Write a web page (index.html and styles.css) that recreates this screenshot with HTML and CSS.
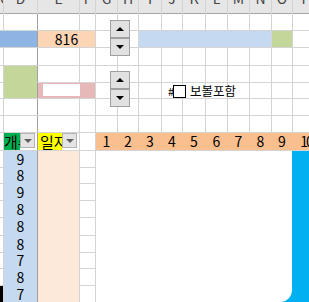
FILE: index.html
```html
<!DOCTYPE html>
<html lang="ko">
<head>
    <meta charset="UTF-8">
    <meta name="viewport" content="width=device-width, initial-scale=1.0">
    <title>Sheet</title>
    <link rel="stylesheet" href="styles.css">
</head>
<body>
    <div class="sheet">
        <div class="grid">
            <!-- column headers -->
            <div class="h"><span>C</span></div>
            <div class="h"><span>D</span></div>
            <div class="h"><span>E</span></div>
            <div class="h"><span>F</span></div>
            <div class="h"><span>G</span></div>
            <div class="h"><span>H</span></div>
            <div class="h"><span>I</span></div>
            <div class="h"><span>J</span></div>
            <div class="h"><span>K</span></div>
            <div class="h"><span>L</span></div>
            <div class="h"><span>M</span></div>
            <div class="h"><span>N</span></div>
            <div class="h"><span>O</span></div>
            <div class="h"><span>P</span></div>

            <!-- row 1 -->
            <div class="c"></div><div class="c"></div><div class="c edge"></div><div class="c"></div>
            <div class="c"></div><div class="c"></div><div class="c"></div><div class="c"></div>
            <div class="c"></div><div class="c"></div><div class="c"></div><div class="c"></div>
            <div class="c"></div><div class="c"></div>

            <!-- row 2 -->
            <div class="c blue span2"></div>
            <div class="c peach span2 edge total">816</div>
            <div class="c"></div><div class="c"></div>
            <div class="c sky span6"></div>
            <div class="c olive"></div>
            <div class="c"></div>

            <!-- row 3 -->
            <div class="c"></div><div class="c"></div><div class="c edge"></div><div class="c"></div>
            <div class="c"></div><div class="c"></div><div class="c"></div><div class="c"></div>
            <div class="c"></div><div class="c"></div><div class="c"></div><div class="c"></div>
            <div class="c"></div><div class="c"></div>

            <!-- row 4 -->
            <div class="c"></div>
            <div class="c olive rows2"></div>
            <div class="c edge"></div><div class="c"></div>
            <div class="c"></div><div class="c"></div><div class="c"></div><div class="c"></div>
            <div class="c"></div><div class="c"></div><div class="c"></div><div class="c"></div>
            <div class="c"></div><div class="c"></div>

            <!-- row 5 -->
            <div class="c"></div>
            <div class="c pink span2 edge"><div class="pink-box"></div></div>
            <div class="c"></div><div class="c"></div><div class="c"></div><div class="c"></div>
            <div class="c"></div><div class="c"></div><div class="c"></div><div class="c"></div>
            <div class="c"></div><div class="c"></div>

            <!-- row 6 -->
            <div class="c"></div><div class="c"></div><div class="c edge"></div><div class="c"></div>
            <div class="c"></div><div class="c"></div><div class="c"></div><div class="c"></div>
            <div class="c"></div><div class="c"></div><div class="c"></div><div class="c"></div>
            <div class="c"></div><div class="c"></div>

            <!-- row 7 -->
            <div class="c"></div><div class="c"></div><div class="c edge"></div><div class="c"></div>
            <div class="c"></div><div class="c"></div><div class="c"></div><div class="c"></div>
            <div class="c"></div><div class="c"></div><div class="c"></div><div class="c"></div>
            <div class="c"></div><div class="c"></div>

            <!-- table header -->
            <div class="c"></div>
            <div class="c filter">
                <span class="label green" style="width: 16px">개수</span>
                <span class="dd"></span>
            </div>
            <div class="c filter edge">
                <span class="label yellow" style="width: 24px">일자</span>
                <span class="dd"></span>
            </div>
            <div class="c"></div>
            <div class="axis">
                <span>1</span><span>2</span><span>3</span><span>4</span><span>5</span>
                <span>6</span><span>7</span><span>8</span><span>9</span><span>10</span>
            </div>

            <!-- data -->
            <div class="c"></div>
            <div class="ids">
                <span>9</span><span>8</span><span>9</span><span>8</span><span>8</span>
                <span>8</span><span>7</span><span>8</span><span>7</span>
            </div>
            <div class="c days edge"></div>
            <div class="c"></div>
            <div class="canvas"><div class="shape"></div></div>

            <div class="c"></div><div class="c"></div>
            <div class="c"></div><div class="c"></div>
            <div class="c"></div><div class="c"></div>
            <div class="c"></div><div class="c"></div>
            <div class="c"></div><div class="c"></div>
            <div class="c"></div><div class="c"></div>
            <div class="c"></div><div class="c"></div>
            <div class="c mark"></div><div class="c"></div>
        </div>

        <!-- form controls over the sheet -->
        <div class="spin" style="top: 20px">
            <button class="spin-btn"><i class="up"></i></button>
            <button class="spin-btn"><i class="down"></i></button>
        </div>
        <div class="spin" style="top: 71px">
            <button class="spin-btn"><i class="up"></i></button>
            <button class="spin-btn"><i class="down"></i></button>
        </div>

        <label class="check">
            <span class="hash">#</span>
            <span class="box"></span>
            보볼포함
        </label>
    </div>
</body>
</html>
```

FILE: styles.css
```css
body {
    margin: 0;
    overflow: hidden;
    font-family: 'Noto Sans CJK KR', 'Noto Sans', sans-serif;
    background-color: #fff;
}

.sheet {
    position: relative;
    width: 309px;
    height: 302px;
    overflow: hidden;
}

.grid {
    display: grid;
    grid-template-columns: 3px 33px 41px 15px 21px 20px 22px 20px 22px 21px 21px 21px 20px 26px;
    grid-template-rows: 13px 16px 16px 17px 16px 15px 16px 16px 17px
                        16px 15px 16px 16px 17px 16px 15px 16px 16px;
    gap: 1px;
    width: 319px;
    background-color: #d4d4d4;
    font-size: 14px;
    color: #000;
}

.h {
    background-color: #e6e6e6;
    color: #444;
    text-align: center;
    line-height: 16px;
    overflow: hidden;
    box-shadow: 0 1px 0 #a6a6a6;
}

.h span {
    display: block;
    margin-top: -10px;
}

.c {
    background-color: #fff;
    overflow: hidden;
}

.edge {
    box-shadow: -1px 0 0 #a0a0a0;
}

.span2 { grid-column: span 2; }
.span6 { grid-column: span 6; }
.rows2 { grid-row: span 2; }

.blue { background-color: #8db4e2; }
.peach { background-color: #fcd5b4; }
.sky { background-color: #c5d9f1; }
.olive { background-color: #c4d79b; }
.pink { background-color: #e6b8b7; }
.mark { background-color: #000; }

.total {
    text-align: center;
    line-height: 16px;
}

.pink {
    padding: 1px 15px 2px 5px;
}

.pink-box {
    height: 100%;
    background-color: #fff;
}

/* filter header cells */
.filter {
    display: flex;
    line-height: 17px;
    font-size: 15px;
}

.label {
    flex: none;
    overflow: hidden;
    white-space: nowrap;
}

.yellow {
    padding-left: 2px;
    box-sizing: border-box;
}

.green { background-color: #00b050; }
.yellow { background-color: #ffff00; }

.dd {
    flex: none;
    width: 15px;
    height: 15px;
    box-sizing: border-box;
    border: 1px solid #b4b4b4;
    background-color: #e4e4e4;
    display: flex;
    align-items: center;
    justify-content: center;
}

.dd::after {
    content: '';
    border-left: 4px solid transparent;
    border-right: 4px solid transparent;
    border-top: 4px solid #5f5f5f;
}

.axis {
    grid-column: span 10;
    display: grid;
    grid-template-columns: subgrid;
    background-color: #fabf8f;
    line-height: 17px;
    text-align: center;
    white-space: nowrap;
}

.axis span:last-child {
    letter-spacing: -2px;
}

.ids {
    grid-row: span 9;
    display: grid;
    grid-template-rows: subgrid;
    background-color: #c5d9f1;
    text-align: center;
    line-height: 15px;
}

.ids span {
    align-self: center;
}

.days {
    grid-row: span 9;
    background-color: #fde9d9;
}

.canvas {
    grid-column: span 10;
    grid-row: span 9;
    display: grid;
    grid-template-columns: subgrid;
    background-color: #00b0f0;
}

.shape {
    grid-column: 1 / 10;
    background-color: #fff;
    border-bottom-right-radius: 12px;
}

/* spinner controls */
.spin {
    position: absolute;
    left: 110px;
    width: 20px;
    display: flex;
    flex-direction: column;
}

.spin-btn {
    height: 18px;
    padding: 0;
    border: 1px solid #a0a0a0;
    background-color: #e1e1e1;
    display: flex;
    align-items: center;
    justify-content: center;
}

.up {
    border-left: 4px solid transparent;
    border-right: 4px solid transparent;
    border-bottom: 4px solid #000;
}

.down {
    border-left: 4px solid transparent;
    border-right: 4px solid transparent;
    border-top: 4px solid #000;
}

/* checkbox */
.check {
    position: absolute;
    left: 168px;
    top: 84px;
    display: flex;
    align-items: center;
    font-size: 12.5px;
    line-height: 14px;
    color: #000;
}

.hash {
    font-size: 11px;
    margin-right: -1px;
}

.box {
    width: 13px;
    height: 13px;
    box-sizing: border-box;
    border: 1px solid #000;
    background-color: #fff;
    margin-right: 4px;
}
```
